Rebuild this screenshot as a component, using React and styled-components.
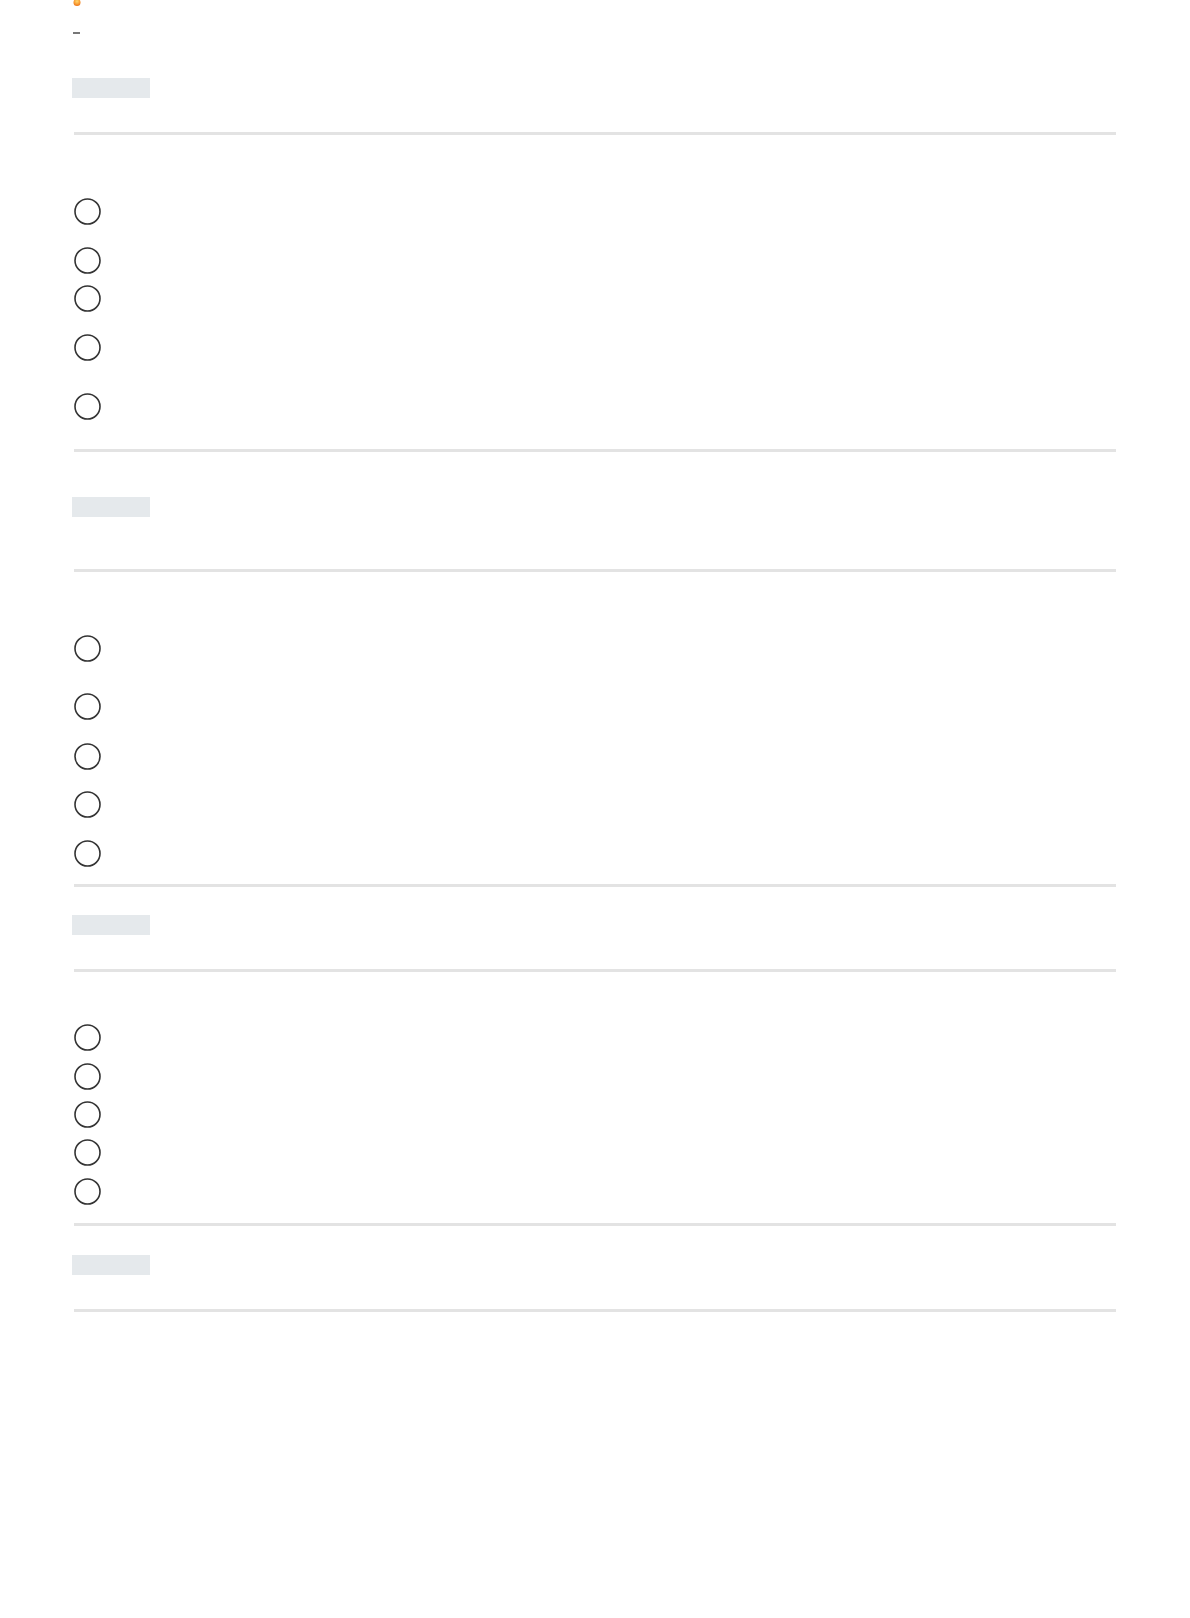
import styled, { createGlobalStyle } from "styled-components";

const GlobalStyle = createGlobalStyle`
  html, body {
    margin: 0;
    padding: 0;
    background: #ffffff;
    font-family: "Liberation Sans", Arial, sans-serif;
  }
`;

const Page = styled.main`
  padding: 0 72px 300px;
`;

const Logo = styled.svg`
  display: block;
  margin-left: 1px;
`;

const Dash = styled.div`
  width: 7px;
  height: 2px;
  margin: 26px 0 0 1px;
  background: #777;
`;

const Header = styled.div`
  padding-top: ${(p) => p.$top}px;
  padding-bottom: ${(p) => p.$bottom}px;
`;

const TitleSkeleton = styled.div`
  width: 78px;
  height: 20px;
  background: #e5e9ec;
`;

const Divider = styled.hr`
  height: 3px;
  margin: 0 2px;
  border: 0;
  background: #e3e3e3;
`;

const OptionList = styled.ul`
  list-style: none;
  margin: 0;
  padding: ${(p) => p.$top}px 0 0;
`;

const Option = styled.li`
  display: flex;
  align-items: flex-start;
  height: ${(p) => p.$height}px;
  padding-left: 1.5px;
`;

const Radio = styled.svg`
  flex: none;
  display: block;
`;

const questions = [
  { top: 44, bottom: 34, listTop: 63, rows: [49, 38, 49, 59, 56] },
  { top: 45, bottom: 52, listTop: 63, rows: [58, 49.5, 48.5, 49, 44] },
  { top: 28, bottom: 34, listTop: 52, rows: [39, 38, 38, 39, 45] },
  { top: 29, bottom: 34, listTop: 0, rows: [] },
];

function RadioCircle() {
  return (
    <Radio width="27" height="27" viewBox="0 0 27 27">
      <circle cx="13.5" cy="13.5" r="12.5" fill="none" stroke="#333" strokeWidth="1.6" />
    </Radio>
  );
}

function Question({ q }) {
  return (
    <section>
      <Header $top={q.top} $bottom={q.bottom}>
        <TitleSkeleton />
      </Header>
      <Divider />
      {q.rows.length > 0 && (
        <>
          <OptionList $top={q.listTop}>
            {q.rows.map((h, i) => (
              <Option key={i} $height={h}>
                <RadioCircle />
              </Option>
            ))}
          </OptionList>
          <Divider />
        </>
      )}
    </section>
  );
}

export default function App() {
  return (
    <>
      <GlobalStyle />
      <Page>
        <Logo width="8" height="6" viewBox="0 0 8 6">
          <defs>
            <radialGradient id="flame" cx="0.5" cy="0.35" r="0.6">
              <stop offset="0" stopColor="#ffd66e" />
              <stop offset="0.6" stopColor="#f9a43a" />
              <stop offset="1" stopColor="#ef7d1f" />
            </radialGradient>
          </defs>
          <circle cx="4" cy="2.4" r="3.5" fill="url(#flame)" />
        </Logo>
        <Dash />
        {questions.map((q, i) => (
          <Question key={i} q={q} />
        ))}
      </Page>
    </>
  );
}
